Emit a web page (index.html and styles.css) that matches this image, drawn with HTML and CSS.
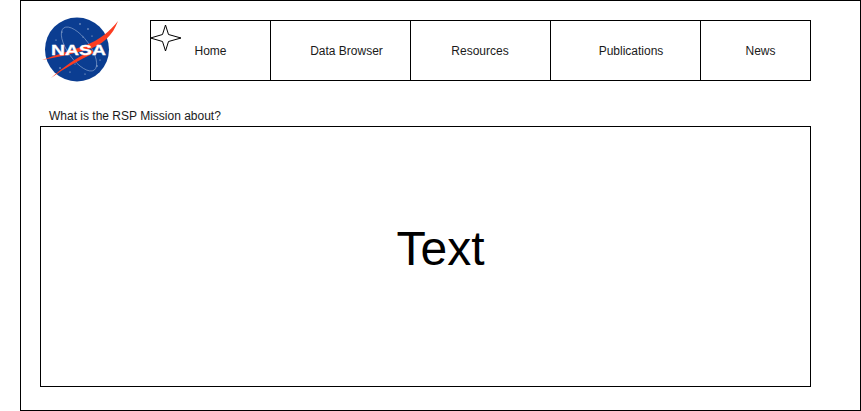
FILE: index.html
```html
<!DOCTYPE html>
<html lang="en">
<head>
<meta charset="UTF-8">
<meta name="viewport" content="width=device-width, initial-scale=1.0">
<title>RSP Mission</title>
<link rel="stylesheet" href="styles.css">
</head>
<body>
<div class="frame">
  <div class="header">
    <svg class="logo" viewBox="21 16 129 66" role="img" aria-label="NASA">
      <circle cx="77" cy="49.5" r="32" fill="#0b3d91"/>
      <g fill="#fff" opacity="0.75">
        <circle cx="62" cy="32" r="0.6"/><circle cx="80" cy="24" r="0.7"/><circle cx="88" cy="29" r="0.7"/>
        <circle cx="83" cy="37" r="0.5"/><circle cx="92" cy="36" r="0.6"/><circle cx="60" cy="68" r="0.7"/>
        <circle cx="70" cy="72" r="0.6"/><circle cx="85" cy="74" r="0.6"/><circle cx="97" cy="66" r="0.7"/>
        <circle cx="56" cy="40" r="0.6"/><circle cx="100" cy="60" r="0.6"/><circle cx="75" cy="64" r="0.5"/>
      </g>
      <ellipse cx="79" cy="49" rx="11" ry="26" transform="rotate(-36 79 49)" fill="none" stroke="#8fa9d2" stroke-width="0.6"/>
      <path d="M118 21 C110 31 100 40 84 46 C72 50 56 55 42 60 C58 57 72 54 86 50 C102 46 113 35 118 21 Z" fill="#fc3d21"/>
      <path d="M92 50 C78 57 63 67 51 78 C65 68 79 60 94 53 Z" fill="#fc3d21"/>
      <text class="logo-text" x="51" y="55" textLength="55" lengthAdjust="spacingAndGlyphs">NASA</text>
    </svg>
    <div class="nav">
      <svg class="star" viewBox="0 0 32 28">
        <path d="M15.5 1 L18.5 10.5 L31 14 L18.5 17.5 L15.5 27 L12.5 17.5 L0.5 14 L12.5 10.5 Z" fill="#fff" stroke="#000" stroke-width="1"/>
      </svg>
      <a class="nav-item nav-home">Home</a>
      <a class="nav-item nav-data">Data Browser</a>
      <a class="nav-item nav-resources">Resources</a>
      <a class="nav-item nav-pubs">Publications</a>
      <a class="nav-item nav-news">News</a>
    </div>
  </div>
  <p class="question">What is the RSP Mission about?</p>
  <div class="content">Text</div>
</div>
</body>
</html>
```

FILE: styles.css
```css
body {
  margin: 0;
  background-color: #fff;
  font-family: "Liberation Sans", Arial, sans-serif;
  color: #000;
  overflow: hidden;
}
.frame {
  box-sizing: border-box;
  width: 841px;
  height: 411px;
  margin-left: 20px;
  border: 1px solid #000;
}
.header {
  display: flex;
  align-items: flex-start;
  padding-top: 15px;
}
.logo {
  display: block;
  flex: none;
  width: 129px;
  height: 66px;
}
.logo-text {
  font-family: "Liberation Sans", Arial, sans-serif;
  font-size: 15.5px;
  font-weight: bold;
  fill: #fff;
  stroke: #fff;
  stroke-width: 0.3px;
}
.nav {
  position: relative;
  display: flex;
  box-sizing: border-box;
  width: 661px;
  height: 61px;
  margin-top: 4px;
  border: 1px solid #000;
}
.star {
  position: absolute;
  left: -1px;
  top: 3px;
  width: 32px;
  height: 28px;
}
.nav-item {
  display: flex;
  align-items: center;
  justify-content: center;
  box-sizing: border-box;
  font-size: 12px;
  color: #1a1a1a;
  border-right: 1px solid #000;
}
.nav-home { width: 120px; }
.nav-data { width: 140px; padding-left: 12px; }
.nav-resources { width: 140px; padding-right: 1px; }
.nav-pubs { width: 150px; padding-left: 11px; }
.nav-news { flex: 1; padding-left: 10px; border-right: none; }
.question {
  height: 17px;
  margin: 27px 0 0 28px;
  font-size: 12px;
  line-height: 15px;
  color: #1a1a1a;
}
.content {
  display: flex;
  align-items: center;
  justify-content: center;
  box-sizing: border-box;
  width: 771px;
  height: 261px;
  margin-left: 19px;
  padding: 0 0 16px 30px;
  border: 1px solid #000;
  font-size: 48px;
}
```
